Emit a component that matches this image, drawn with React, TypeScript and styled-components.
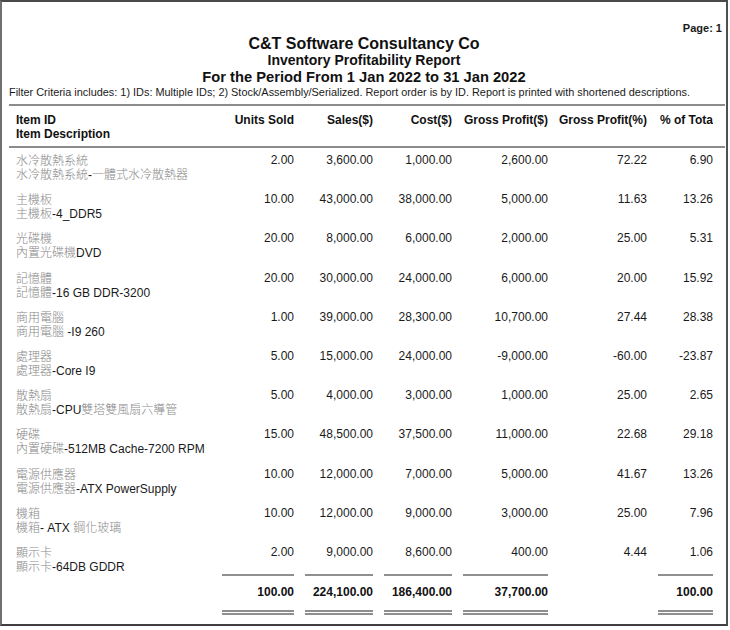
import React from "react";
import styled, { createGlobalStyle } from "styled-components";

const GlobalStyle = createGlobalStyle`
  html, body { margin: 0; padding: 0; background: #ffffff; }
  body { font-family: "Liberation Sans", Arial, "Noto Sans CJK TC", sans-serif; color: #1a1a1a; }
`;

const Frame = styled.div`
  box-sizing: border-box;
  width: 728px;
  height: 626px;
  border-top: 2px solid #4a4a4a;
  border-left: 2px solid #707070;
  border-right: 2px solid #505050;
  border-bottom: 2px solid #404040;
  background: #fff;
  display: flex;
  flex-direction: column;
  overflow: hidden;
`;

const PageNo = styled.div`
  margin-top: 20px;
  padding-right: 4px;
  text-align: right;
  font-size: 11px;
  line-height: 13px;
  font-weight: bold;
`;

const Title = styled.div<{ $size: number }>`
  text-align: center;
  font-size: ${(p) => p.$size}px;
  line-height: 17px;
  font-weight: bold;
  color: #111;
`;

const Filter = styled.div`
  padding-left: 7px;
  font-size: 10.9px;
  line-height: 12px;
  white-space: nowrap;
`;

const Rule = styled.div<{ $top: number; $bottom: number }>`
  height: 2px;
  background: #8c8c8c;
  margin: ${(p) => p.$top}px 1px ${(p) => p.$bottom}px 7px;
`;

const Grid = styled.div`
  display: grid;
  grid-template-columns: 195px 72px 68px 68px 85px 88px 55px;
  column-gap: 11px;
  padding-left: 14px;
`;

const HeadRow = styled(Grid)`
  font-size: 12px;
  line-height: 14px;
  font-weight: bold;
  color: #111;
`;

const HeadCell = styled.div<{ $right?: boolean }>`
  text-align: ${(p) => (p.$right ? "right" : "left")};
  white-space: nowrap;
  overflow: hidden;
`;

const Rows = styled.div`
  display: flex;
  flex-direction: column;
  gap: 11.2px;
`;

const Row = styled(Grid)`
  height: 28px;
  font-size: 12px;
  line-height: 14px;
  color: #1a1a1a;
`;

const ItemCell = styled.div`
  display: flex;
  flex-direction: column;
  white-space: nowrap;
`;

const ItemLine = styled.div`
  height: 14px;
  line-height: 14px;
`;

const Num = styled.div<{ $bold?: boolean }>`
  text-align: right;
  white-space: nowrap;
  font-weight: ${(p) => (p.$bold ? "bold" : "normal")};
`;

const Cjk = styled.span`
  font-family: "Noto Sans CJK TC", sans-serif;
  color: #888888;
  font-weight: 300;
  line-height: 14px;
`;

const LineRow = styled(Grid)`
  height: 2px;
  margin-top: 1px;
`;

const Line = styled.div<{ $on?: boolean }>`
  height: 2px;
  background: ${(p) => (p.$on ? "#8f8f8f" : "transparent")};
`;

const TotalRow = styled(Grid)`
  margin-top: 9px;
  font-size: 12px;
  line-height: 14px;
  color: #111;
`;

const DoubleRow = styled(Grid)`
  margin-top: 11px;
`;

const DoubleLine = styled.div<{ $on?: boolean }>`
  height: 1px;
  border-top: 2px solid ${(p) => (p.$on ? "#8f8f8f" : "transparent")};
  border-bottom: 2px solid ${(p) => (p.$on ? "#8f8f8f" : "transparent")};
`;

const mixed = (s: string) =>
  s.split(/([\u3000-\u9fff\uff00-\uffef]+)/).map((part, i) =>
    /[\u3000-\u9fff\uff00-\uffef]/.test(part) ? <Cjk key={i}>{part}</Cjk> : <span key={i}>{part}</span>
  );

type Item = { id: string; desc: string; vals: string[] };

const items: Item[] = [
  { id: "水冷散熱系統", desc: "水冷散熱系統-一體式水冷散熱器", vals: ["2.00", "3,600.00", "1,000.00", "2,600.00", "72.22", "6.90"] },
  { id: "主機板", desc: "主機板-4_DDR5", vals: ["10.00", "43,000.00", "38,000.00", "5,000.00", "11.63", "13.26"] },
  { id: "光碟機", desc: "內置光碟機DVD", vals: ["20.00", "8,000.00", "6,000.00", "2,000.00", "25.00", "5.31"] },
  { id: "記憶體", desc: "記憶體-16 GB DDR-3200", vals: ["20.00", "30,000.00", "24,000.00", "6,000.00", "20.00", "15.92"] },
  { id: "商用電腦", desc: "商用電腦 -I9 260", vals: ["1.00", "39,000.00", "28,300.00", "10,700.00", "27.44", "28.38"] },
  { id: "處理器", desc: "處理器-Core I9", vals: ["5.00", "15,000.00", "24,000.00", "-9,000.00", "-60.00", "-23.87"] },
  { id: "散熱扇", desc: "散熱扇-CPU雙塔雙風扇六導管", vals: ["5.00", "4,000.00", "3,000.00", "1,000.00", "25.00", "2.65"] },
  { id: "硬碟", desc: "內置硬碟-512MB Cache-7200 RPM", vals: ["15.00", "48,500.00", "37,500.00", "11,000.00", "22.68", "29.18"] },
  { id: "電源供應器", desc: "電源供應器-ATX PowerSupply", vals: ["10.00", "12,000.00", "7,000.00", "5,000.00", "41.67", "13.26"] },
  { id: "機箱", desc: "機箱- ATX 鋼化玻璃", vals: ["10.00", "12,000.00", "9,000.00", "3,000.00", "25.00", "7.96"] },
  { id: "顯示卡", desc: "顯示卡-64DB GDDR", vals: ["2.00", "9,000.00", "8,600.00", "400.00", "4.44", "1.06"] },
];

const headers = ["Units Sold", "Sales($)", "Cost($)", "Gross Profit($)", "Gross Profit(%)", "% of Tota"];
const totals = ["100.00", "224,100.00", "186,400.00", "37,700.00", "", "100.00"];
const underlined = [true, true, true, true, false, true];

export default function App() {
  return (
    <>
      <GlobalStyle />
      <Frame>
        <PageNo>Page: 1</PageNo>
        <Title $size={16}>C&amp;T Software Consultancy Co</Title>
        <Title $size={14}>Inventory Profitability Report</Title>
        <Title $size={14.7}>For the Period From 1 Jan 2022 to 31 Jan 2022</Title>
        <Filter>
          Filter Criteria includes: 1) IDs: Multiple IDs; 2) Stock/Assembly/Serialized. Report order is by ID. Report is printed with shortened descriptions.
        </Filter>
        <Rule $top={6} $bottom={7} />
        <HeadRow>
          <HeadCell>
            Item ID
            <br />
            Item Description
          </HeadCell>
          {headers.map((h) => (
            <HeadCell key={h} $right>
              {h}
            </HeadCell>
          ))}
        </HeadRow>
        <Rule $top={5} $bottom={5} />
        <Rows>
          {items.map((it) => (
            <Row key={it.id}>
              <ItemCell>
                <ItemLine>{mixed(it.id)}</ItemLine>
                <ItemLine>{mixed(it.desc)}</ItemLine>
              </ItemCell>
              {it.vals.map((v, i) => (
                <Num key={i}>{v}</Num>
              ))}
            </Row>
          ))}
        </Rows>
        <LineRow>
          <div />
          {underlined.map((u, i) => (
            <Line key={i} $on={u} />
          ))}
        </LineRow>
        <TotalRow>
          <div />
          {totals.map((t, i) => (
            <Num key={i} $bold>
              {t}
            </Num>
          ))}
        </TotalRow>
        <DoubleRow>
          <div />
          {underlined.map((u, i) => (
            <DoubleLine key={i} $on={u} />
          ))}
        </DoubleRow>
      </Frame>
    </>
  );
}
